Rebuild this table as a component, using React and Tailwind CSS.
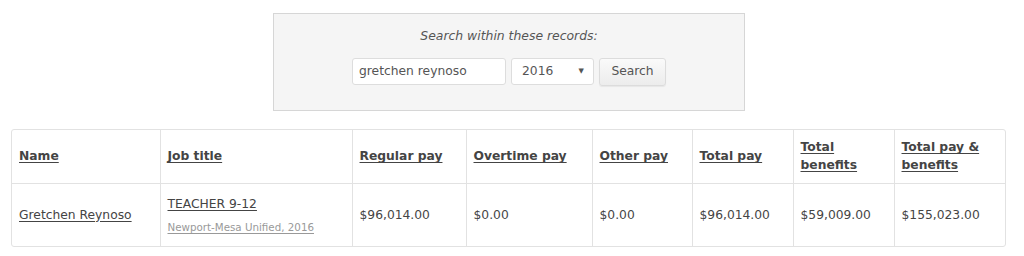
export default function App() {
  const cols = [
    { label: 'Name', w: 'w-[148px]' },
    { label: 'Job title', w: 'w-[192px]' },
    { label: 'Regular pay', w: 'w-[114px]' },
    { label: 'Overtime pay', w: 'w-[126px]' },
    { label: 'Other pay', w: 'w-[100px]' },
    { label: 'Total pay', w: 'w-[101px]' },
    { label: 'Total benefits', w: 'w-[101px]' },
    { label: 'Total pay & benefits', w: 'w-[111px]' },
  ]
  const values = ['$96,014.00', '$0.00', '$0.00', '$96,014.00', '$59,009.00', '$155,023.00']

  return (
    <div className="bg-white w-[1024px] h-[256px] pt-[13px] font-['DejaVu_Sans',Verdana,sans-serif] text-[#444]">
      <div className="ml-[273px] w-[472px] h-[98px] bg-[#f5f5f5] border border-[#d6d6d6] pt-[13px] flex flex-col items-center">
        <p className="italic text-[12.4px] text-[#555]">Search within these records:</p>
        <div className="flex gap-[5px] mt-[12px]">
          <input
            defaultValue="gretchen reynoso"
            className="w-[154px] h-[27px] border border-[#ddd] rounded-[3px] bg-white px-[6px] text-[12.3px] text-[#555]"
          />
          <div className="w-[83px] h-[27px] border border-[#ddd] rounded-[3px] bg-white pl-[10px] pr-[9px] flex items-center justify-between text-[12.3px] text-[#555]">
            <span>2016</span>
            <span className="text-[7px]">▼</span>
          </div>
          <button className="w-[67px] h-[28px] border border-[#dcdcdc] rounded-[3px] bg-gradient-to-b from-[#fafafa] to-[#ececec] text-[12.3px] text-[#555] shadow-[0_1px_1px_rgba(0,0,0,0.06)]">
            Search
          </button>
        </div>
      </div>

      <div className="mx-[11px] mt-[18px] w-[995px] border border-[#e2e2e2] rounded-[3px] overflow-hidden">
        <table className="w-full border-collapse text-[12.3px] table-fixed">
          <thead>
            <tr className="h-[53px] border-b border-[#e2e2e2]">
              {cols.map((c, i) => (
                <th
                  key={c.label}
                  className={`${c.w} text-left align-middle font-bold px-[7px] leading-[18px] ${i > 0 ? 'border-l border-[#e2e2e2]' : ''}`}
                >
                  <span className="underline underline-offset-2 text-[#444]">{c.label}</span>
                </th>
              ))}
            </tr>
          </thead>
          <tbody>
            <tr className="h-[63px]">
              <td className="px-[7px] align-middle">
                <span className="underline underline-offset-2">Gretchen Reynoso</span>
              </td>
              <td className="px-[7px] align-middle border-l border-[#e2e2e2]">
                <div className="underline underline-offset-2 pt-[1px]">TEACHER 9-12</div>
                <div className="underline underline-offset-2 text-[10.3px] text-[#999] mt-[6px]">Newport-Mesa Unified, 2016</div>
              </td>
              {values.map((v, i) => (
                <td key={i} className="px-[7px] align-middle border-l border-[#e2e2e2]">
                  {v}
                </td>
              ))}
            </tr>
          </tbody>
        </table>
      </div>
    </div>
  )
}
